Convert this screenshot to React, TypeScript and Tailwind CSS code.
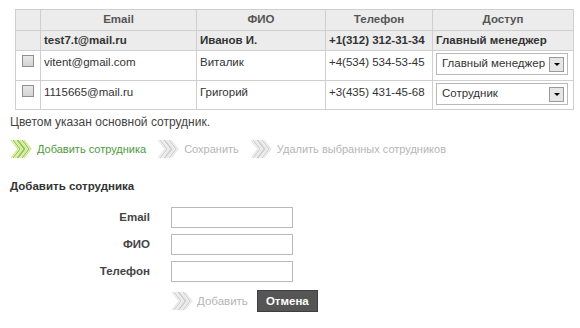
import React from 'react';

const Chevrons = ({ green = false }: { green?: boolean }) => {
  const c1 = green ? '#cfe68a' : '#e6e6e6';
  const c2 = green ? '#8cc63f' : '#cccccc';
  return (
    <svg width="22" height="22" viewBox="0 0 22 22" className="shrink-0">
      {[0, 2, 4, 6].map((o) => (
        <polyline
          key={'a' + o}
          points={`${1 + o},2 ${8 + o},11 ${1 + o},20`}
          fill="none"
          stroke={o % 4 === 0 ? c1 : c2}
          strokeWidth="1.2"
        />
      ))}
      {[0, 2, 4, 6].map((o) => (
        <polyline
          key={'b' + o}
          points={`${8 + o},2 ${15 + o},11 ${8 + o},20`}
          fill="none"
          stroke={o % 4 === 0 ? c2 : c1}
          strokeWidth="1.2"
        />
      ))}
    </svg>
  );
};

const Select = ({ value }: { value: string }) => (
  <div className="flex items-center justify-between w-[132px] h-[22px] border border-[#b9b9b9] bg-white pl-[5px] pr-[3px] whitespace-nowrap">
    <span>{value}</span>
    <span className="flex items-center justify-center w-[15px] h-[15px] border border-[#9a9a9a] bg-[#e6e6e6]">
      <span className="w-0 h-0 border-l-[3px] border-r-[3px] border-t-[3px] border-l-transparent border-r-transparent border-t-black" />
    </span>
  </div>
);

const Checkbox = () => (
  <div className="w-[12px] h-[12px] border border-[#8f8f8f] bg-gradient-to-b from-[#e8e8e8] to-[#d3d3d3] mx-auto mt-[4px]" />
);

const App: React.FC = () => {
  const cell = 'border border-[#cfcfcf] px-[3px] whitespace-nowrap';
  return (
    <div className="w-[580px] h-[328px] bg-white text-[12px] text-[#333] font-['Liberation_Sans',Arial,sans-serif] overflow-hidden">
      {/* Таблица сотрудников */}
      <div className="pt-[9px] pl-[15px]">
        <table className="border-collapse table-fixed w-[558px] text-[11.5px]">
          <colgroup>
            <col className="w-[25px]" />
            <col className="w-[156px]" />
            <col className="w-[129px]" />
            <col className="w-[107px]" />
            <col className="w-[141px]" />
          </colgroup>
          <thead>
            <tr className="h-[21px] bg-[#ececec] text-[#555] font-bold">
              <th className={cell}></th>
              <th className={cell}>Email</th>
              <th className={cell}>ФИО</th>
              <th className={cell}>Телефон</th>
              <th className={cell}>Доступ</th>
            </tr>
          </thead>
          <tbody>
            <tr className="h-[20px] bg-[#ececec] font-bold">
              <td className={cell}></td>
              <td className={cell}>test7.t@mail.ru</td>
              <td className={cell}>Иванов И.</td>
              <td className={cell}>+1(312) 312-31-34</td>
              <td className={cell}>Главный менеджер</td>
            </tr>
            <tr className="h-[30px] align-top">
              <td className={cell}><Checkbox /></td>
              <td className={cell + ' pt-[3px]'}>vitent@gmail.com</td>
              <td className={cell + ' pt-[3px]'}>Виталик</td>
              <td className={cell + ' pt-[3px]'}>+4(534) 534-53-45</td>
              <td className={cell + ' pt-[2px]'}><Select value="Главный менеджер" /></td>
            </tr>
            <tr className="h-[29px] align-top">
              <td className={cell}><Checkbox /></td>
              <td className={cell + ' pt-[3px]'}>1115665@mail.ru</td>
              <td className={cell + ' pt-[3px]'}>Григорий</td>
              <td className={cell + ' pt-[3px]'}>+3(435) 431-45-68</td>
              <td className={cell + ' pt-[2px]'}><Select value="Сотрудник" /></td>
            </tr>
          </tbody>
        </table>
      </div>

      <p className="pl-[10px] mt-[3px] text-[#444]">Цветом указан основной сотрудник.</p>

      {/* Действия */}
      <div className="flex items-center pl-[10px] mt-[7px] gap-[5px] text-[11px]">
        <Chevrons green />
        <span className="text-[#4d9a3c] mr-[6px]">Добавить сотрудника</span>
        <Chevrons />
        <span className="text-[#b5b5b5] mr-[6px]">Сохранить</span>
        <Chevrons />
        <span className="text-[#b5b5b5]">Удалить выбранных сотрудников</span>
      </div>

      <h3 className="pl-[10px] mt-[18px] font-bold text-[#333] text-[11.5px]">Добавить сотрудника</h3>

      {/* Форма */}
      <div className="grid grid-cols-[150px_122px] gap-x-[21px] gap-y-[6px] mt-[12px] items-center text-[11.5px]">
        <label className="text-right font-bold text-[#444]">Email</label>
        <input className="h-[21px] border border-[#b9b9b9] bg-white" />
        <label className="text-right font-bold text-[#444]">ФИО</label>
        <input className="h-[21px] border border-[#b9b9b9] bg-white" />
        <label className="text-right font-bold text-[#444]">Телефон</label>
        <input className="h-[21px] border border-[#b9b9b9] bg-white" />
      </div>

      <div className="flex items-center ml-[171px] mt-[8px] text-[11.5px]">
        <Chevrons />
        <span className="ml-[4px] text-[#b5b5b5]">Добавить</span>
        <button className="ml-[9px] w-[61px] h-[22px] bg-[#555] text-white font-bold border border-[#3e3e3e]">Отмена</button>
      </div>
    </div>
  );
};

export default App;
